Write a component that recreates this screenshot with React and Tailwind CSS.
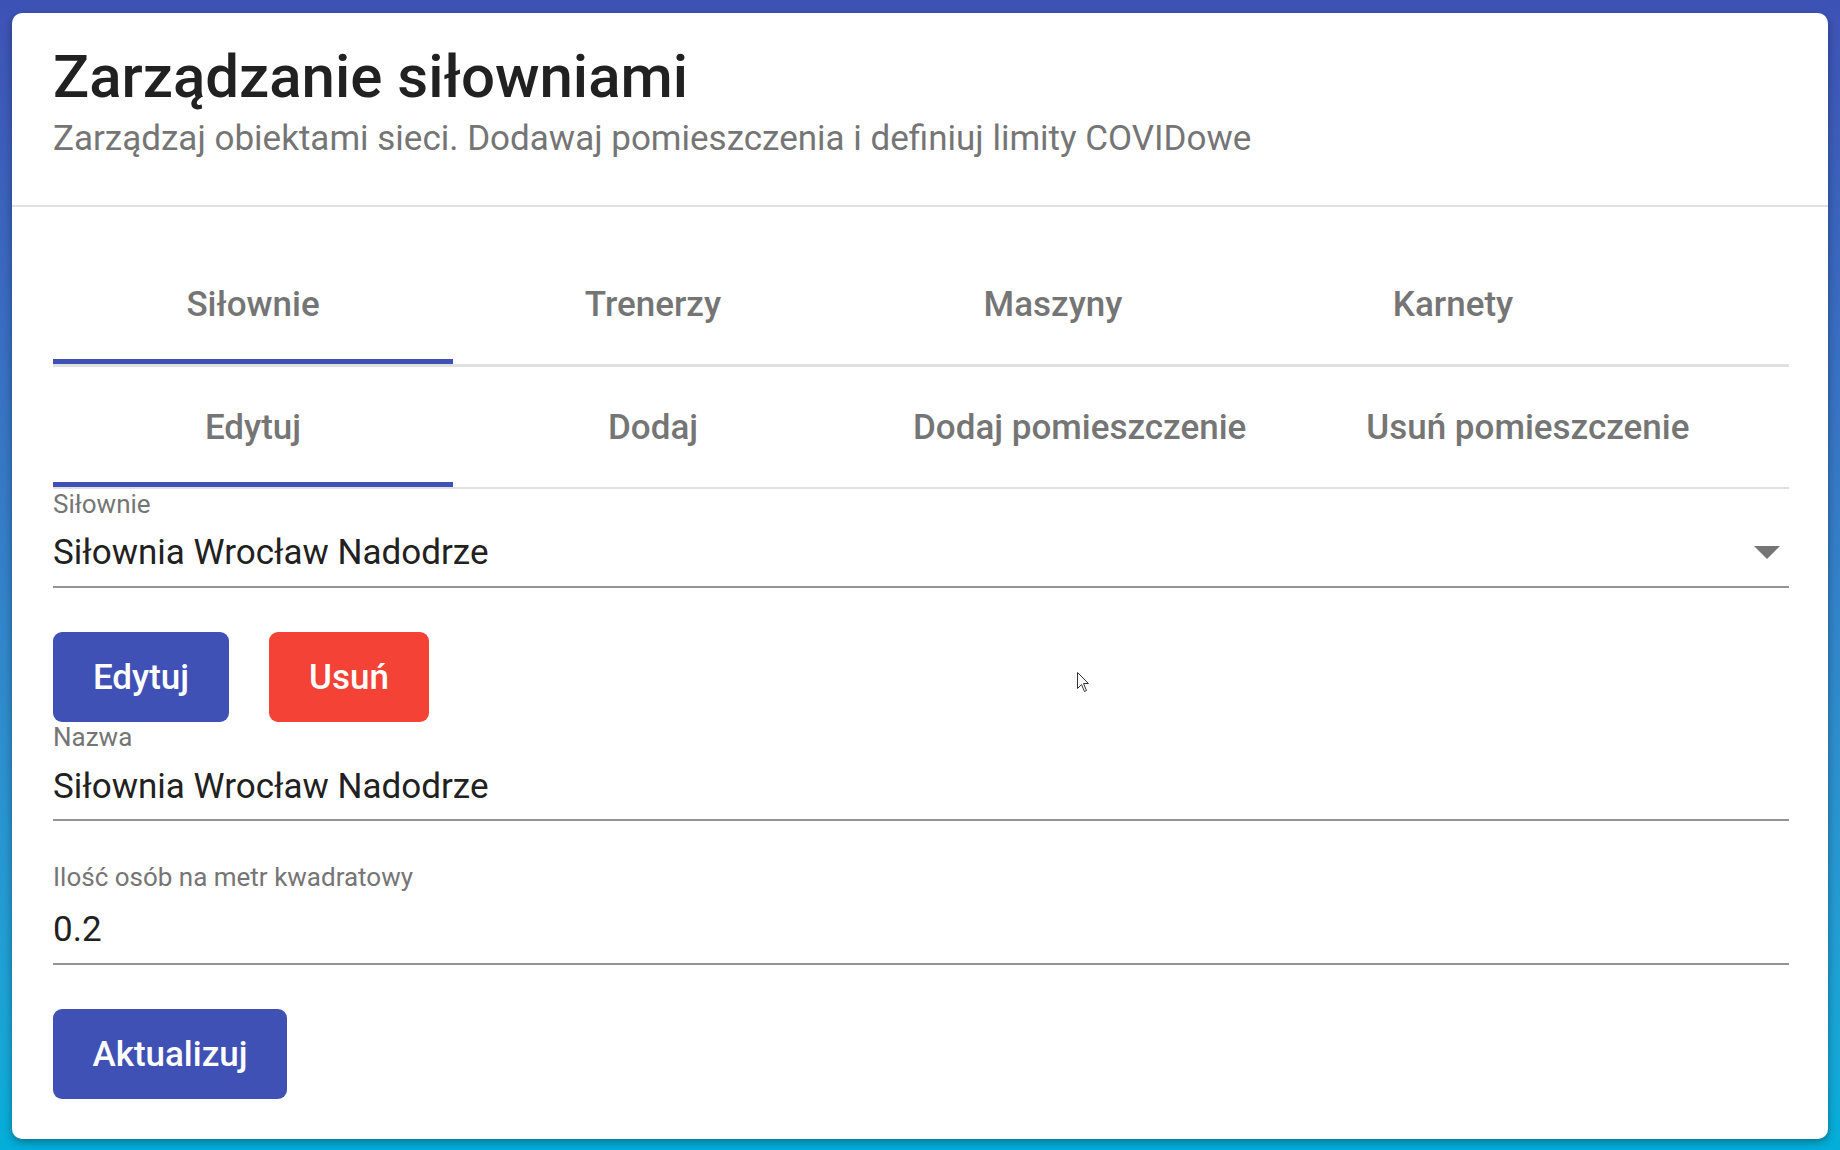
import React from "react";

function Tab({ label, active }) {
  return (
    <div className="relative flex h-full min-w-[400px] items-center justify-center px-[60px] text-[35px] leading-none font-medium text-[#757575]">
      <span className="whitespace-nowrap">{label}</span>
      {active && <div className="absolute bottom-0 left-0 right-0 h-[5px] bg-[#3f51b5]" />}
    </div>
  );
}

function Field({ label, value, labelGap, select, bottomPad }) {
  return (
    <div className="flex flex-col">
      <div className="text-[26px] leading-none text-[#757575]">{label}</div>
      <div className={`relative border-b-2 border-[#949494] ${bottomPad}`} style={{ marginTop: labelGap }}>
        <div className="text-[35px] leading-none text-[#212121]">{value}</div>
        {select && (
          <svg className="absolute right-[9px] top-[11px]" width="26" height="13" viewBox="0 0 26 13">
            <path d="M0 0 L26 0 L13 13 Z" fill="#757575" />
          </svg>
        )}
      </div>
    </div>
  );
}

export default function App() {
  return (
    <div className="relative min-h-[1150px] w-full bg-linear-to-b from-[#3e52b6] to-[#02afda] px-[12px] pt-[13px] pb-[13px] font-['Roboto','Liberation_Sans',sans-serif]">
      <div className="rounded-[10px] bg-white shadow-[0_3px_8px_rgba(0,0,0,0.35)]">
        <div className="border-b-2 border-[#e0e0e0] pl-[41px] pr-[39px] pt-[34px] pb-[49px]">
          <h1 className="text-[60px] leading-none font-medium text-[#212121]">Zarządzanie siłowniami</h1>
          <p className="mt-[14px] text-[35px] leading-none text-[#757575]">
            Zarządzaj obiektami sieci. Dodawaj pomieszczenia i definiuj limity COVIDowe
          </p>
        </div>
        <div className="pl-[41px] pr-[39px] pt-[38px] pb-[40px]">
          <div className="flex h-[122px] border-b-[3px] border-[#e0e0e0]">
            <Tab label="Siłownie" active />
            <Tab label="Trenerzy" />
            <Tab label="Maszyny" />
            <Tab label="Karnety" />
          </div>
          <div className="flex h-[122px] border-b-2 border-[#e0e0e0]">
            <Tab label="Edytuj" active />
            <Tab label="Dodaj" />
            <Tab label="Dodaj pomieszczenie" />
            <Tab label="Usuń pomieszczenie" />
          </div>
          <div className="mt-[2px]">
            <Field label="Siłownie" value="Siłownia Wrocław Nadodrze" labelGap={18} select bottomPad="pb-[16px]" />
          </div>
          <div className="mt-[44px] flex gap-[40px]">
            <button className="flex h-[90px] w-[176px] items-center justify-center rounded-[9px] bg-[#3f51b5] text-[35px] leading-none font-medium text-white">
              Edytuj
            </button>
            <button className="flex h-[90px] w-[160px] items-center justify-center rounded-[9px] bg-[#f44336] text-[35px] leading-none font-medium text-white">
              Usuń
            </button>
          </div>
          <div className="mt-[2px]">
            <Field label="Nazwa" value="Siłownia Wrocław Nadodrze" labelGap={19} bottomPad="pb-[15px]" />
          </div>
          <div className="mt-[43px]">
            <Field label="Ilość osób na metr kwadratowy" value="0.2" labelGap={22} bottomPad="pb-[16px]" />
          </div>
          <div className="mt-[44px] flex">
            <button className="flex h-[90px] w-[234px] items-center justify-center rounded-[9px] bg-[#3f51b5] text-[35px] leading-none font-medium text-white">
              Aktualizuj
            </button>
          </div>
        </div>
      </div>
      <svg className="absolute left-[1077px] top-[672px]" width="13" height="21" viewBox="0 0 13 21">
        <path d="M0.5 0.5 L0.5 16.5 L4.5 12.5 L7.5 19.5 L9.5 18.5 L6.5 11.5 L11.5 11.5 Z" fill="#ffffff" stroke="#333333" strokeWidth="1" />
      </svg>
    </div>
  );
}
